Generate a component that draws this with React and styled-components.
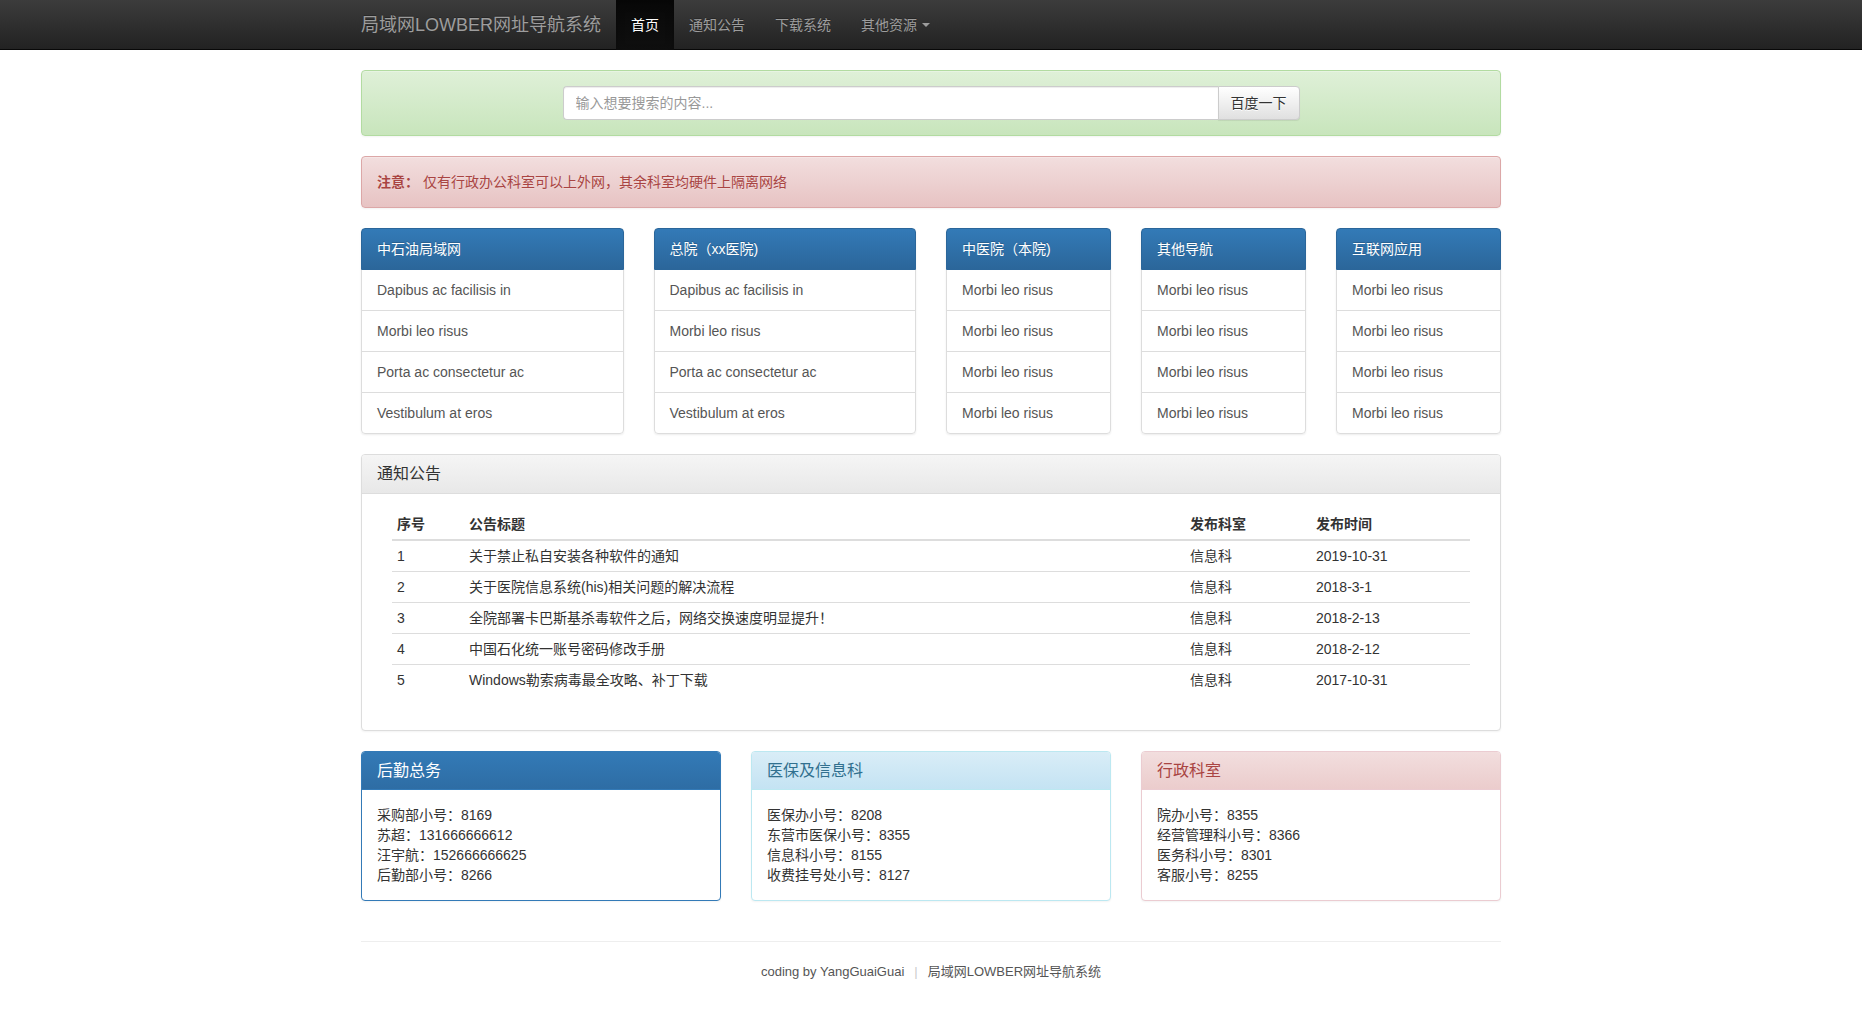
import React from "react";
import styled, { createGlobalStyle } from "styled-components";

const GlobalStyle = createGlobalStyle`
  * { box-sizing: border-box; }
  html, body { margin: 0; padding: 0; background: #fff; }
  body {
    font-family: "Liberation Sans", "Noto Sans CJK SC", sans-serif;
    font-size: 14px;
    line-height: 20px;
    color: #333;
  }
`;

const Navbar = styled.nav`
  height: 50px;
  background-image: linear-gradient(to bottom, #3c3c3c 0%, #222 100%);
  border-bottom: 1px solid #080808;
  margin-bottom: 20px;
`;

const NavInner = styled.div`
  width: 1170px;
  margin: 0 auto;
  display: flex;
  align-items: stretch;
  height: 49px;
`;

const Brand = styled.a`
  display: block;
  padding: 15px;
  font-size: 18px;
  line-height: 20px;
  color: #9d9d9d;
  text-shadow: 0 -1px 0 rgba(0, 0, 0, 0.25);
  text-decoration: none;
  white-space: nowrap;
`;

const NavList = styled.ul`
  list-style: none;
  margin: 0;
  padding: 0;
  display: flex;
`;

const NavItem = styled.li`
  display: flex;
  align-items: center;
  padding: 0 15px;
  height: 50px;
  color: ${(p) => (p.$active ? "#fff" : "#9d9d9d")};
  background-image: ${(p) =>
    p.$active ? "linear-gradient(to bottom, #080808 0%, #0f0f0f 100%)" : "none"};
  box-shadow: ${(p) => (p.$active ? "inset 0 3px 9px rgba(0,0,0,0.25)" : "none")};
  text-shadow: 0 -1px 0 rgba(0, 0, 0, 0.25);
  font-size: 14px;
  white-space: nowrap;
`;

const Caret = styled.span`
  display: inline-block;
  width: 0;
  height: 0;
  margin-left: 5px;
  border-top: 4px solid #9d9d9d;
  border-left: 4px solid transparent;
  border-right: 4px solid transparent;
`;

const Container = styled.main`
  width: 1140px;
  margin: 0 auto;
  display: flex;
  flex-direction: column;
  gap: 20px;
`;

const Alert = styled.div`
  border: 1px solid ${(p) => (p.$variant === "success" ? "#b2dba1" : "#dca7a7")};
  border-radius: 4px;
  padding: 15px;
  color: ${(p) => (p.$variant === "success" ? "#3c763d" : "#a94442")};
  background-image: ${(p) =>
    p.$variant === "success"
      ? "linear-gradient(to bottom, #dff0d8 0%, #c8e5bc 100%)"
      : "linear-gradient(to bottom, #f2dede 0%, #e7c3c3 100%)"};
  text-shadow: 0 1px 0 rgba(255, 255, 255, 0.2);
  box-shadow: inset 0 1px 0 rgba(255, 255, 255, 0.25), 0 1px 2px rgba(0, 0, 0, 0.05);
`;

const SearchForm = styled.form`
  width: 737px;
  margin: 0 auto;
  display: flex;
  height: 34px;
`;

const SearchInput = styled.input`
  flex: 1;
  height: 34px;
  padding: 6px 12px;
  font-family: inherit;
  font-size: 14px;
  color: #555;
  background: #fff;
  border: 1px solid #ccc;
  border-right: none;
  border-radius: 4px 0 0 4px;
  box-shadow: inset 0 1px 1px rgba(0, 0, 0, 0.075);
  outline: none;
  &::placeholder { color: #999; }
`;

const SearchButton = styled.button`
  height: 34px;
  padding: 6px 12px;
  font-family: inherit;
  font-size: 14px;
  line-height: 20px;
  color: #333;
  border: 1px solid #ccc;
  border-radius: 0 4px 4px 0;
  background-image: linear-gradient(to bottom, #fff 0%, #e0e0e0 100%);
  text-shadow: 0 1px 0 #fff;
  box-shadow: inset 0 1px 0 rgba(255, 255, 255, 0.15), 0 1px 1px rgba(0, 0, 0, 0.075);
  white-space: nowrap;
`;

const Strong = styled.strong`
  font-weight: bold;
  margin-right: 4px;
`;

const LinkGrid = styled.section`
  display: grid;
  grid-template-columns: repeat(2, 262.5px) repeat(3, 165px);
  column-gap: 30px;
`;

const ListGroup = styled.ul`
  list-style: none;
  margin: 0;
  padding: 0;
  border-radius: 4px;
  box-shadow: 0 1px 2px rgba(0, 0, 0, 0.075);
`;

const ListItem = styled.li`
  position: relative;
  padding: 10px 15px;
  margin-bottom: -1px;
  border: 1px solid ${(p) => (p.$active ? "#2b669a" : "#ddd")};
  background: #fff;
  color: #555;
  white-space: nowrap;
  &:first-child {
    border-radius: 4px 4px 0 0;
  }
  &:last-child {
    margin-bottom: 0;
    border-radius: 0 0 4px 4px;
  }
  ${(p) =>
    p.$active &&
    `
    z-index: 2;
    color: #fff;
    background-image: linear-gradient(to bottom, #337ab7 0%, #2b669a 100%);
    text-shadow: 0 -1px 0 #286090;
  `}
`;

const panelColors = {
  default: { border: "#ddd", from: "#f5f5f5", to: "#e8e8e8", text: "#333" },
  primary: { border: "#337ab7", from: "#337ab7", to: "#2e6da4", text: "#fff" },
  info: { border: "#bce8f1", from: "#d9edf7", to: "#c4e3f3", text: "#31708f" },
  danger: { border: "#ebccd1", from: "#f2dede", to: "#ebcccc", text: "#a94442" },
};

const Panel = styled.section`
  background: #fff;
  border: 1px solid ${(p) => panelColors[p.$variant].border};
  border-radius: 4px;
  box-shadow: 0 1px 2px rgba(0, 0, 0, 0.05);
`;

const PanelHeading = styled.div`
  padding: 10px 15px;
  border-bottom: 1px solid ${(p) => panelColors[p.$variant].border};
  border-radius: 3px 3px 0 0;
  background-image: ${(p) =>
    `linear-gradient(to bottom, ${panelColors[p.$variant].from} 0%, ${panelColors[p.$variant].to} 100%)`};
  color: ${(p) => panelColors[p.$variant].text};
`;

const PanelTitle = styled.h3`
  margin: 0;
  font-size: 16px;
  font-weight: normal;
  line-height: 17.6px;
  color: inherit;
`;

const PanelBody = styled.div`
  padding: 15px;
`;

const TableWrap = styled.div`
  padding: 0 15px;
`;

const Table = styled.table`
  width: 100%;
  border-collapse: collapse;
  border-spacing: 0;
  margin-bottom: 20px;
  table-layout: fixed;
`;

const Th = styled.th`
  text-align: left;
  font-weight: bold;
  padding: 5px;
  border-bottom: 2px solid #ddd;
  width: ${(p) => p.$w || "auto"};
  white-space: nowrap;
`;

const Td = styled.td`
  padding: 5px;
  border-top: 1px solid #ddd;
  white-space: nowrap;
`;

const ContactGrid = styled.section`
  display: grid;
  grid-template-columns: repeat(3, 1fr);
  column-gap: 30px;
`;

const ContactLine = styled.div`
  white-space: nowrap;
`;

const Footer = styled.footer`
  border-top: 1px solid #eee;
  margin-top: 40px;
  padding: 20px 0 40px;
  text-align: center;
  font-size: 13px;
  color: #555;
`;

const Sep = styled.span`
  color: #ccc;
  margin: 0 10px;
`;

const groups = [
  { title: "中石油局域网", items: ["Dapibus ac facilisis in", "Morbi leo risus", "Porta ac consectetur ac", "Vestibulum at eros"] },
  { title: "总院（xx医院)", items: ["Dapibus ac facilisis in", "Morbi leo risus", "Porta ac consectetur ac", "Vestibulum at eros"] },
  { title: "中医院（本院)", items: ["Morbi leo risus", "Morbi leo risus", "Morbi leo risus", "Morbi leo risus"] },
  { title: "其他导航", items: ["Morbi leo risus", "Morbi leo risus", "Morbi leo risus", "Morbi leo risus"] },
  { title: "互联网应用", items: ["Morbi leo risus", "Morbi leo risus", "Morbi leo risus", "Morbi leo risus"] },
];

const notices = [
  ["1", "关于禁止私自安装各种软件的通知", "信息科", "2019-10-31"],
  ["2", "关于医院信息系统(his)相关问题的解决流程", "信息科", "2018-3-1"],
  ["3", "全院部署卡巴斯基杀毒软件之后，网络交换速度明显提升！", "信息科", "2018-2-13"],
  ["4", "中国石化统一账号密码修改手册", "信息科", "2018-2-12"],
  ["5", "Windows勒索病毒最全攻略、补丁下载", "信息科", "2017-10-31"],
];

const contacts = [
  { variant: "primary", title: "后勤总务", lines: ["采购部小号：8169", "苏超：131666666612", "汪宇航：152666666625", "后勤部小号：8266"] },
  { variant: "info", title: "医保及信息科", lines: ["医保办小号：8208", "东营市医保小号：8355", "信息科小号：8155", "收费挂号处小号：8127"] },
  { variant: "danger", title: "行政科室", lines: ["院办小号：8355", "经营管理科小号：8366", "医务科小号：8301", "客服小号：8255"] },
];

export default function App() {
  return (
    <>
      <GlobalStyle />
      <Navbar>
        <NavInner>
          <Brand>局域网LOWBER网址导航系统</Brand>
          <NavList>
            <NavItem $active>首页</NavItem>
            <NavItem>通知公告</NavItem>
            <NavItem>下载系统</NavItem>
            <NavItem>
              其他资源
              <Caret />
            </NavItem>
          </NavList>
        </NavInner>
      </Navbar>
      <Container>
        <Alert $variant="success">
          <SearchForm onSubmit={(e) => e.preventDefault()}>
            <SearchInput placeholder="输入想要搜索的内容..." />
            <SearchButton type="submit">百度一下</SearchButton>
          </SearchForm>
        </Alert>
        <Alert $variant="danger">
          <Strong>注意：</Strong>仅有行政办公科室可以上外网，其余科室均硬件上隔离网络
        </Alert>
        <LinkGrid>
          {groups.map((g, i) => (
            <ListGroup key={i}>
              <ListItem $active>{g.title}</ListItem>
              {g.items.map((it, j) => (
                <ListItem key={j}>{it}</ListItem>
              ))}
            </ListGroup>
          ))}
        </LinkGrid>
        <Panel $variant="default">
          <PanelHeading $variant="default">
            <PanelTitle>通知公告</PanelTitle>
          </PanelHeading>
          <PanelBody>
            <TableWrap>
              <Table>
                <thead>
                  <tr>
                    <Th $w="72px">序号</Th>
                    <Th>公告标题</Th>
                    <Th $w="126px">发布科室</Th>
                    <Th $w="159px">发布时间</Th>
                  </tr>
                </thead>
                <tbody>
                  {notices.map((row) => (
                    <tr key={row[0]}>
                      {row.map((c, k) => (
                        <Td key={k}>{c}</Td>
                      ))}
                    </tr>
                  ))}
                </tbody>
              </Table>
            </TableWrap>
          </PanelBody>
        </Panel>
        <ContactGrid>
          {contacts.map((c) => (
            <Panel key={c.title} $variant={c.variant}>
              <PanelHeading $variant={c.variant}>
                <PanelTitle>{c.title}</PanelTitle>
              </PanelHeading>
              <PanelBody>
                {c.lines.map((l) => (
                  <ContactLine key={l}>{l}</ContactLine>
                ))}
              </PanelBody>
            </Panel>
          ))}
        </ContactGrid>
      </Container>
      <Container>
        <Footer>
          coding by YangGuaiGuai<Sep>|</Sep>局域网LOWBER网址导航系统
        </Footer>
      </Container>
    </>
  );
}
